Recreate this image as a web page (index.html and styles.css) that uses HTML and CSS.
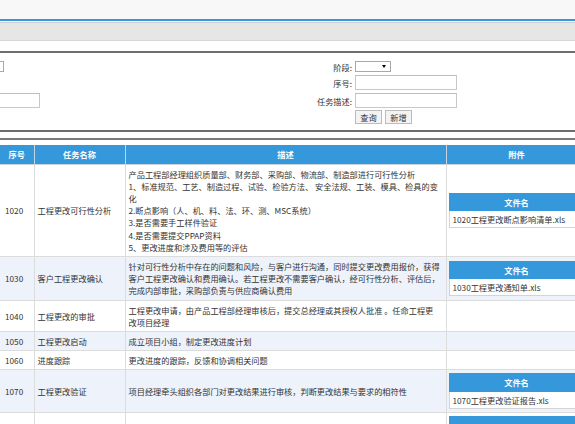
FILE: index.html
```html
<!DOCTYPE html>
<html lang="zh-CN">
<head>
<meta charset="utf-8">
<title>工程更改任务</title>
<link rel="stylesheet" href="styles.css">
</head>
<body>
<div class="topbar"></div>
<div class="navbar"></div>

<div class="search">
  <div class="sgrid">
    <div class="lcell"><span class="sel sel-left"></span></div>
    <label class="lbl">阶段:</label>
    <div class="fcell"><span class="sel"></span></div>

    <div class="lcell"></div>
    <label class="lbl">序号:</label>
    <div class="fcell"><span class="inp"></span></div>

    <div class="lcell"><span class="inp inp-left"></span></div>
    <label class="lbl">任务描述:</label>
    <div class="fcell"><span class="inp"></span></div>

    <div class="lcell"></div>
    <div></div>
    <div class="fcell btns"><button class="btn">查询</button><button class="btn">新增</button></div>
  </div>
</div>
<div class="divider"></div>

<table class="grid">
  <colgroup>
    <col class="c1"><col class="c2"><col class="c3"><col class="c4">
  </colgroup>
  <thead>
    <tr><th>序号</th><th>任务名称</th><th>描述</th><th>附件</th></tr>
  </thead>
  <tbody>
    <tr>
      <td>1020</td>
      <td>工程更改可行性分析</td>
      <td>产品工程部经理组织质量部、财务部、采购部、物流部、制造部进行可行性分析<br>1、标准规范、工艺、制造过程、试验、检验方法、 安全法规、工装、模具、检具的变<br>化<br>2.断点影响（人、机、料、法、环、测、MSC系统）<br>3.是否需要手工样件验证<br>4.是否需要提交PPAP资料<br>5、更改进度和涉及费用等的评估</td>
      <td class="att">
        <table class="files"><tr><th>文件名</th></tr><tr><td>1020工程更改断点影响清单.xls</td></tr></table>
      </td>
    </tr>
    <tr class="alt">
      <td>1030</td>
      <td>客户工程更改确认</td>
      <td>针对可行性分析中存在的问题和风险，与客户进行沟通，同时提交更改费用报价，获得<br>客户工程更改确认和费用确认。若工程更改不需要客户确认，经可行性分析、评估后，<br>完成内部审批，采购部负责与供应商确认费用</td>
      <td class="att">
        <table class="files"><tr><th>文件名</th></tr><tr><td>1030工程更改通知单.xls</td></tr></table>
      </td>
    </tr>
    <tr>
      <td>1040</td>
      <td>工程更改的审批</td>
      <td>工程更改申请，由产品工程部经理审核后，提交总经理或其授权人批准 。任命工程更<br>改项目经理</td>
      <td class="att"></td>
    </tr>
    <tr class="alt">
      <td>1050</td>
      <td>工程更改启动</td>
      <td>成立项目小组，制定更改进度计划</td>
      <td class="att"></td>
    </tr>
    <tr>
      <td>1060</td>
      <td>进度跟踪</td>
      <td>更改进度的跟踪，反馈和协调相关问题</td>
      <td class="att"></td>
    </tr>
    <tr class="alt">
      <td>1070</td>
      <td>工程更改验证</td>
      <td>项目经理牵头组织各部门对更改结果进行审核，判断更改结果与要求的相符性</td>
      <td class="att">
        <table class="files"><tr><th>文件名</th></tr><tr><td>1070工程更改验证报告.xls</td></tr></table>
      </td>
    </tr>
    <tr class="last">
      <td></td>
      <td></td>
      <td></td>
      <td class="att"><div class="fbar"></div></td>
    </tr>
  </tbody>
</table>
</body>
</html>
```

FILE: styles.css
```css
html, body {
  margin: 0;
  padding: 0;
  overflow: hidden;
  background: #ffffff;
}
body {
  font-family: "Noto Sans CJK SC", "Noto Sans", sans-serif;
  font-size: 8.2px;
  color: #333333;
  width: 575px;
}

.topbar {
  height: 19px;
  background: #f8f8f8;
  border-bottom: 2px solid #3498db;
}
.navbar {
  margin-top: 1px;
  height: 17px;
  background: #e6e6e6;
  border-top: 1px solid #cfcfcf;
  border-bottom: 1px solid #d6d6d6;
}

.search {
  margin-top: 10px;
  border-top: 2px solid #6e6e6e;
  border-bottom: 2px solid #6e6e6e;
  padding: 8px 0 5px 0;
}
.sgrid {
  display: grid;
  grid-template-columns: 40px 309px 102px;
  grid-template-rows: 11px 15px 15px 14px;
  column-gap: 3px;
  row-gap: 3px;
}
.lcell, .fcell {
  display: flex;
  align-items: stretch;
}
.lbl {
  text-align: right;
  align-self: center;
  line-height: 12px;
  color: #333;
}
.sel {
  display: block;
  position: relative;
  box-sizing: border-box;
  width: 36px;
  height: 11px;
  border: 1px solid #a9a9a9;
  background: #ffffff;
}
.sel::after {
  content: "";
  position: absolute;
  right: 4px;
  top: 3px;
  border-left: 2px solid transparent;
  border-right: 2px solid transparent;
  border-top: 3px solid #000;
}
.sel-left {
  margin-left: -32px;
}
.inp {
  display: block;
  box-sizing: border-box;
  width: 102px;
  height: 15px;
  border: 1px solid #c8c8c8;
  border-top-color: #bdbdbd;
  background: #fff;
}
.inp-left {
  margin-left: -62px;
}
.btns {
  gap: 3px;
  margin-top: -1px;
}
.btn {
  box-sizing: border-box;
  height: 14px;
  width: 27px;
  padding: 0;
  font-family: inherit;
  font-size: 8.2px;
  line-height: 12px;
  color: #333;
  background: #f3f3f3;
  border: 1px solid #bcbcbc;
  border-radius: 0;
}

.divider {
  margin-top: 6px;
  border-top: 2px solid #7a7a7a;
  height: 5px;
}

table.grid {
  table-layout: fixed;
  width: 587px;
  border-collapse: collapse;
  line-height: 12.2px;
}
.c1 { width: 34px; }
.c2 { width: 91px; }
.c3 { width: 321px; }
.c4 { width: 141px; }

table.grid > thead th {
  background: #3498db;
  color: #ffffff;
  font-weight: bold;
  text-align: center;
  padding: 3px 2px;
  line-height: 12.5px;
  border-left: 1px solid #c9d3dc;
  border-right: 1px solid #c9d3dc;
  border-top: 0;
  border-bottom: 1px solid #c9d3dc;
}
table.grid > thead th:first-child { border-left: 0; }

table.grid > tbody > tr > td {
  padding: 3px 1px 3px 3px;
  border: 1px solid #dcdcdc;
  vertical-align: middle;
  text-align: left;
  color: #333;
  white-space: nowrap;
  overflow: hidden;
}
table.grid > tbody > tr > td:first-child {
  border-left: 0;
  padding-left: 5px;
}
table.grid > tbody > tr.alt > td {
  background: #eef2fa;
}
table.grid > tbody > tr > td.att {
  padding: 3px 2px;
}
table.grid > tbody > tr.last > td {
  height: 36px;
  vertical-align: top;
}

table.files {
  width: 100%;
  border-collapse: collapse;
  line-height: 12.2px;
}
table.files th {
  background: #3498db;
  color: #ffffff;
  font-weight: bold;
  text-align: center;
  padding: 2px 2px;
  border: 1px solid #3498db;
}
table.files td {
  background: #ffffff;
  border: 1px solid #d4d4d4;
  padding: 2px 3px;
  color: #333;
  white-space: nowrap;
}
.fbar {
  height: 17px;
  background: #3498db;
}
```
